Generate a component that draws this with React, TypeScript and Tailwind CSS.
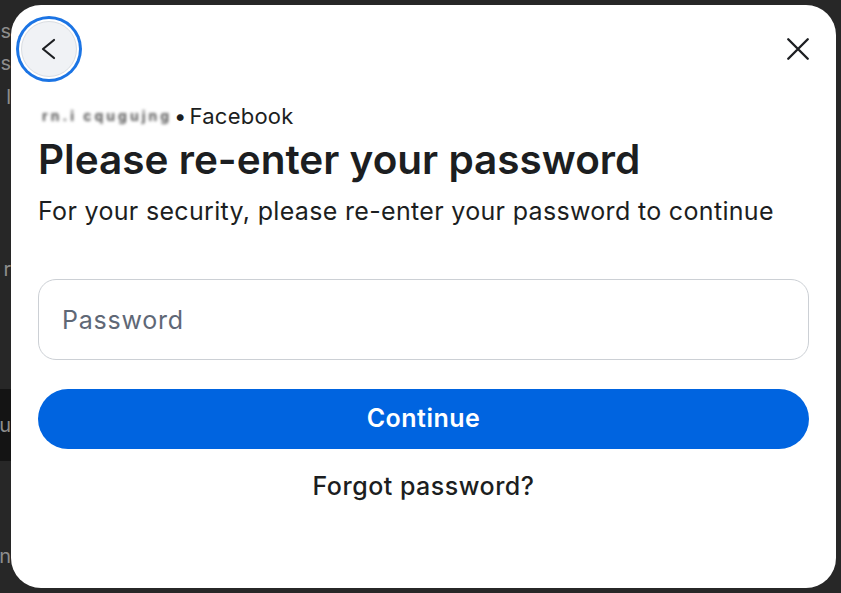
import { useState } from "react";

const font = { fontFamily: "Inter, 'Noto Sans', 'Liberation Sans', sans-serif" };

function BackdropLines() {
  // bits of the page behind the dimmed overlay, peeking out left of the dialog
  const lines: { text: string; className: string }[] = [
    { text: "s", className: "mt-[18px] h-[26px]" },
    { text: "s", className: "mt-[6px] h-[26px]" },
    { text: "l", className: "mt-[8px] h-[26px]" },
    { text: "r", className: "mt-[146px] h-[26px]" },
    { text: "u", className: "mt-[107px] h-[72px] bg-[#141414]" },
    { text: "n", className: "mt-[82px] h-[26px]" },
  ];
  return (
    <div className="flex w-[11px] flex-col">
      {lines.map((line, i) => (
        <div
          key={i}
          className={`flex w-[11px] shrink-0 items-center justify-end text-[20px] leading-[26px] text-[#8d8d8d] ${line.className}`}
        >
          {line.text}
        </div>
      ))}
    </div>
  );
}

export default function App() {
  const [password, setPassword] = useState("");

  return (
    <div className="relative flex h-[593px] w-[841px] overflow-hidden bg-[#272727]" style={font}>
      <BackdropLines />

      <div className="absolute left-[11px] top-[5px] flex h-[583px] w-[825px] flex-col rounded-[30px] bg-white">
        <div className="flex items-start justify-between pl-[10px] pr-[18px] pt-[16px]">
          <button
            type="button"
            aria-label="Back"
            className="flex h-[56px] w-[56px] items-center justify-center rounded-full border border-[#dadde1] bg-[#f0f2f5] ring-[3px] ring-[#1b74e4] ring-offset-[2px]"
          >
            <svg width="24" height="24" viewBox="0 0 24 24" fill="none">
              <path d="M17 3 6 12l11 9" stroke="#1c1e21" strokeWidth="2.2" strokeLinecap="round" strokeLinejoin="round" />
            </svg>
          </button>
          <button type="button" aria-label="Close" className="flex h-[56px] w-[40px] items-center justify-center">
            <svg width="26" height="26" viewBox="0 0 24 24" fill="none">
              <path d="M3 3l18 18M21 3 3 21" stroke="#1c1e21" strokeWidth="2.2" strokeLinecap="round" />
            </svg>
          </button>
        </div>

        <div className="flex flex-col px-[27px]">
          <div className="mt-[25px] flex items-center text-[22px] leading-[28px] tracking-[0.01em] text-[#1c1e21]">
            <span className="ml-[4px] select-none whitespace-nowrap text-[14px] font-bold tracking-[3px] text-[#555] blur-[1.4px]">
              rn.i cqugujng
            </span>
            <span className="ml-[2px]">•</span>
            <span className="ml-[3px]">Facebook</span>
          </div>

          <h1 className="mt-[6px] text-[40.5px] font-semibold leading-[48px] text-[#1c1e21]">
            Please re-enter your password
          </h1>
          <p className="mt-[11px] text-[25px] leading-[32px] tracking-[0.013em] text-[#1c1e21]">
            For your security, please re-enter your password to continue
          </p>

          <input
            type="password"
            aria-label="Password"
            value={password}
            onChange={(e) => setPassword(e.target.value)}
            placeholder="Password"
            className="mt-[52px] h-[81px] rounded-[18px] border border-[#ccd0d5] bg-white px-[23px] text-[25px] tracking-[0.03em] text-[#1c1e21] outline-none placeholder:text-[#5f6876]"
          />

          <button
            type="button"
            className="mt-[29px] h-[60px] rounded-full bg-[#0064e0] text-[25px] font-semibold tracking-[0.02em] text-white"
          >
            Continue
          </button>

          <button
            type="button"
            className="mt-[21px] self-center text-[25px] font-medium leading-[32px] tracking-[0.02em] text-[#1c1e21]"
          >
            Forgot password?
          </button>
        </div>
      </div>
    </div>
  );
}
